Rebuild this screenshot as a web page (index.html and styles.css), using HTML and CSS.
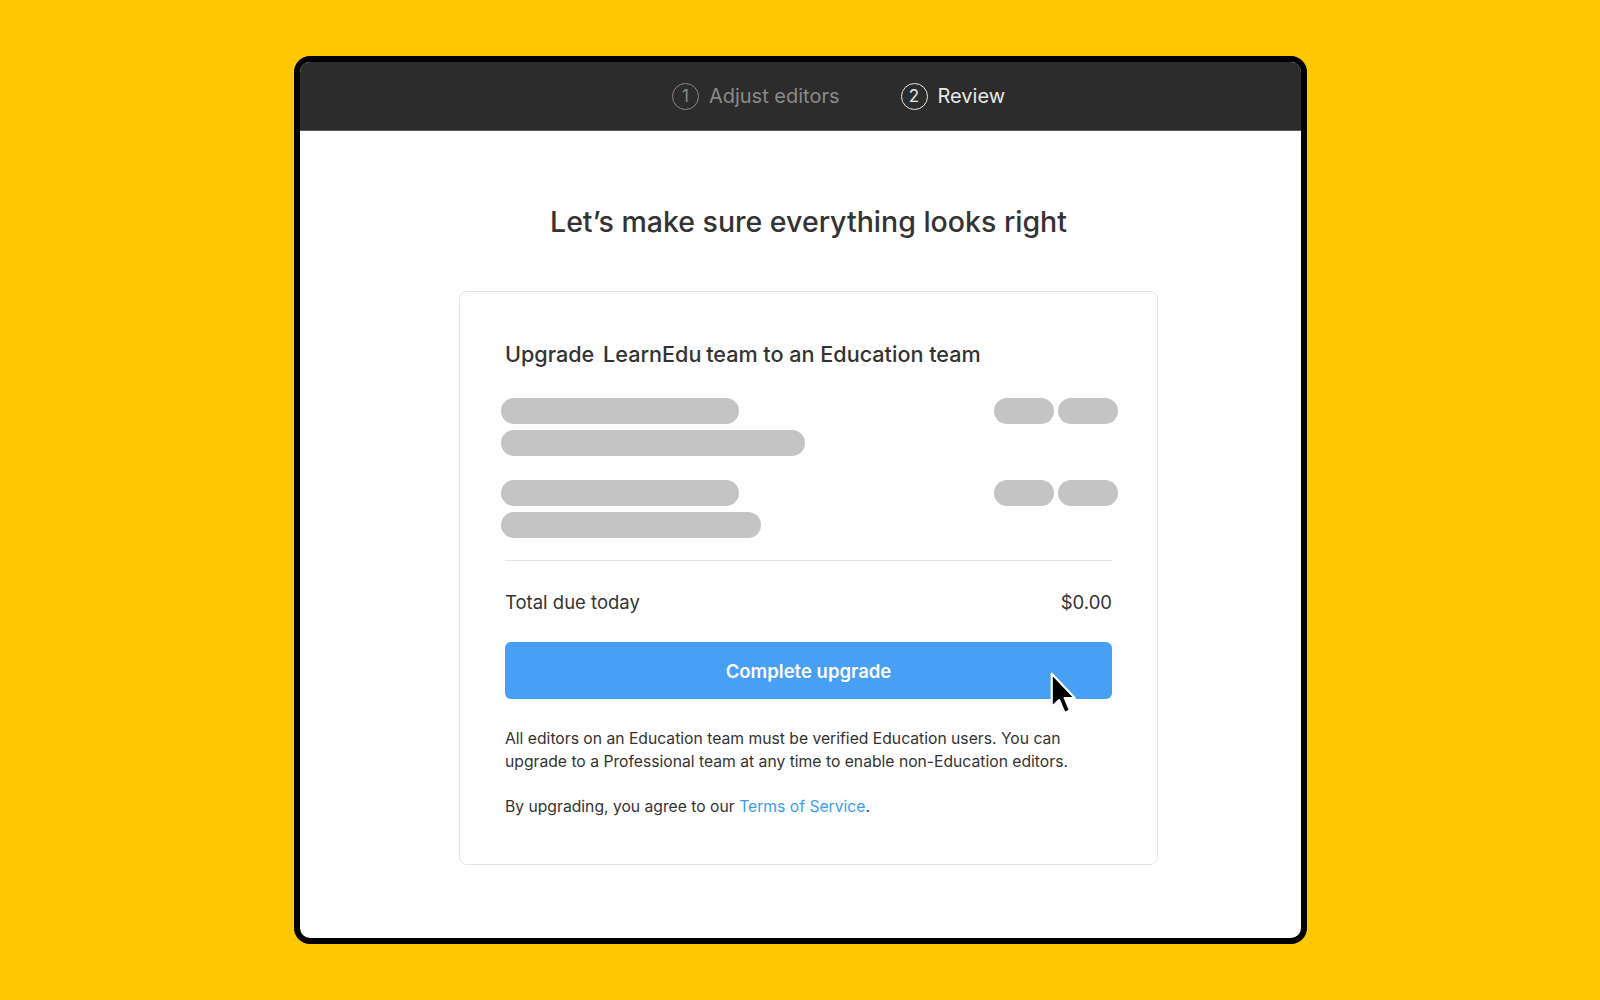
FILE: index.html
```html
<!DOCTYPE html>
<html lang="en">
<head>
    <meta charset="UTF-8">
    <meta name="viewport" content="width=device-width, initial-scale=1.0">
    <title>Review upgrade</title>
    <link rel="stylesheet" href="styles.css">
</head>
<body>
    <div class="window">
        <header class="steps">
            <div class="step">
                <span class="step-num">1</span>
                <span>Adjust editors</span>
            </div>
            <div class="step active">
                <span class="step-num">2</span>
                <span>Review</span>
            </div>
        </header>

        <main class="review">
            <h1>Let’s make sure everything looks right</h1>

            <section class="card">
                <h2 class="card-title">Upgrade <span class="team-name">LearnEdu</span> team to an Education team</h2>

                <!-- righe del riepilogo (placeholder) -->
                <div class="line-item">
                    <div class="item-info">
                        <div class="bar" style="width: 238px"></div>
                        <div class="bar" style="width: 304px"></div>
                    </div>
                    <div class="item-price">
                        <div class="pill"></div>
                        <div class="pill"></div>
                    </div>
                </div>
                <div class="line-item">
                    <div class="item-info">
                        <div class="bar" style="width: 238px"></div>
                        <div class="bar" style="width: 260px"></div>
                    </div>
                    <div class="item-price">
                        <div class="pill"></div>
                        <div class="pill"></div>
                    </div>
                </div>

                <hr class="divider">

                <div class="total-row">
                    <span>Total due today</span>
                    <span>$0.00</span>
                </div>

                <div class="button-wrap">
                    <button class="upgrade-btn">Complete upgrade</button>
                    <svg class="cursor" width="29" height="47" viewBox="0 0 16 26">
                        <path d="M1.5 1.5 L1.5 20 L5.6 16.1 L8.6 23.2 L11.6 21.9 L8.7 15 L14.3 15 Z" fill="#000" stroke="#fff" stroke-width="1.2" stroke-linejoin="round"/>
                    </svg>
                </div>

                <p class="note">All editors on an Education team must be verified Education users. You can upgrade to a Professional team at any time to enable non-Education editors.</p>
                <p class="note terms">By upgrading, you agree to our <a href="#">Terms of Service</a>.</p>
            </section>
        </main>
    </div>
</body>
</html>
```

FILE: styles.css
```css
body {
    margin: 0;
    padding: 0;
    background-color: #ffc700;
    font-family: Inter, "Noto Sans", Arial, sans-serif;
    color: #333;
}

.window {
    box-sizing: border-box;
    width: 1013px;
    height: 888px;
    margin: 56px 0 0 294px;
    background-color: #fff;
    border: 6px solid #000;
    border-radius: 16px;
    overflow: hidden;
}

.steps {
    height: 68px;
    background-color: #2c2c2c;
    border-bottom: 1px solid #5e5e5e;
    display: flex;
    align-items: center;
    justify-content: center;
    gap: 61px;
    padding-left: 76px;
}

.step {
    display: flex;
    align-items: center;
    gap: 10px;
    font-size: 20px;
    color: #8a8a8a;
}

.step.active {
    color: #e8e8e8;
}

.step-num {
    box-sizing: border-box;
    width: 27px;
    height: 27px;
    border: 1.5px solid currentColor;
    border-radius: 50%;
    display: flex;
    align-items: center;
    justify-content: center;
    font-size: 17px;
}

.review {
    padding: 74px 0 0 16px;
}

h1 {
    margin: 0 0 52px;
    font-size: 28.5px;
    line-height: 34px;
    font-weight: 500;
    text-align: center;
    color: #333;
}

.card {
    box-sizing: border-box;
    width: 699px;
    margin: 0 auto;
    padding: 48px 45px 46px;
    border: 1px solid #e4e4e4;
    border-radius: 8px;
}

.card-title {
    margin: 0 0 30px;
    font-size: 21.6px;
    line-height: 28px;
    font-weight: 500;
}

.team-name {
    margin: 0 -1px 0 3px;
}

.line-item {
    display: flex;
    justify-content: space-between;
    margin: 0 -6px 24px -4px;
}

.item-info {
    display: flex;
    flex-direction: column;
    gap: 6px;
}

.item-price {
    display: flex;
    gap: 4px;
}

.bar,
.pill {
    height: 26px;
    border-radius: 13px;
    background-color: #c4c4c4;
}

.pill {
    width: 60px;
}

.divider {
    margin: -2px 0 0;
    border: none;
    border-top: 1px solid #e4e4e4;
}

.total-row {
    display: flex;
    justify-content: space-between;
    margin-top: 29px;
    font-size: 18.5px;
    line-height: 24px;
}

.button-wrap {
    position: relative;
    margin-top: 28px;
}

.upgrade-btn {
    display: block;
    width: 100%;
    height: 57px;
    border: none;
    border-radius: 6px;
    background-color: #48a0f4;
    color: #fff;
    font-family: inherit;
    font-size: 18.5px;
    font-weight: 600;
    cursor: pointer;
}

.cursor {
    position: absolute;
    left: 544px;
    top: 29px;
}

.note {
    max-width: 590px;
    margin: 28px 0 0;
    font-size: 15.7px;
    line-height: 23px;
}

.note.terms {
    margin-top: 22px;
}

.note a {
    color: #3b9cf2;
    text-decoration: none;
}
```
